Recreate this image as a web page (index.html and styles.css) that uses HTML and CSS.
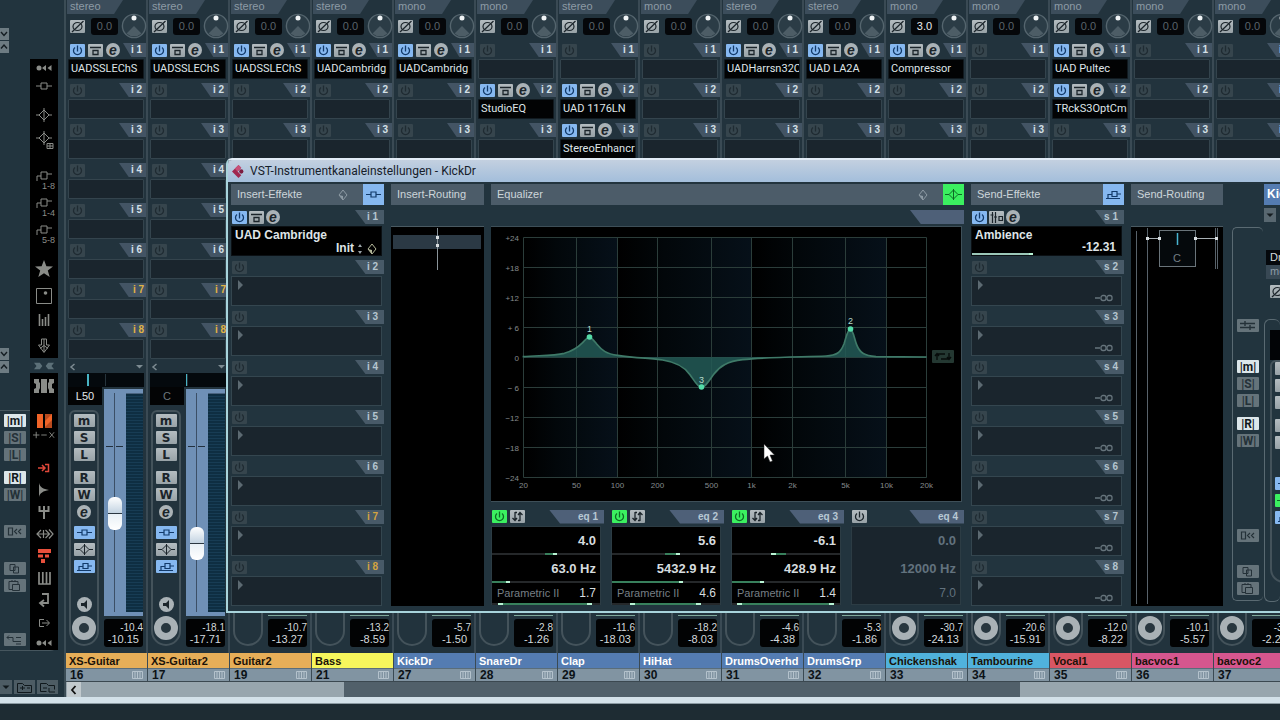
FILE: index.html
```html
<!DOCTYPE html>
<html lang="de">
<head>
<meta charset="utf-8">
<title>VST-Instrumentkanaleinstellungen - KickDr</title>
<link rel="stylesheet" href="styles.css">
</head>
<body>
<svg class="sprite" aria-hidden="true">
  <symbol id="power" viewBox="0 0 15 13"><path d="M5 3.5a4 4 0 1 0 5 0M7.5 1.5v6" fill="none" stroke="currentColor" stroke-width="1.3"/></symbol>
  <symbol id="bypass" viewBox="0 0 15 13"><path d="M2 3.5h11M5 6.500h5v4h-5z" fill="none" stroke="currentColor" stroke-width="1.3"/></symbol>
  <symbol id="prefader" viewBox="0 0 15 13"><path d="M3.500 1v11M6.500 1v11M1.500 4h3M5 6h3M10 5.500h3.500v4H10z" fill="none" stroke="currentColor" stroke-width="1.2"/></symbol>
  <symbol id="phase" viewBox="0 0 15 13"><ellipse cx="7.500" cy="6.500" rx="4.500" ry="4" fill="none" stroke="currentColor" stroke-width="1.2"/><path d="M2 12L13.500 1" stroke="currentColor" stroke-width="1.2"/></symbol>
  <symbol id="insert" viewBox="0 0 21 13"><path d="M3 6.500h5M8 4h5v5H8zM13 6.500h5" fill="none" stroke="currentColor" stroke-width="1.200"/></symbol>
  <symbol id="eq" viewBox="0 0 21 13"><path d="M2 6.500h4M15 6.500h4M10.500 2L15 6.500l-4.500 4.500L6 6.500zM10.500 1v11" fill="none" stroke="currentColor" stroke-width="1"/></symbol>
  <symbol id="send" viewBox="0 0 21 13"><path d="M3 10.500h14M5 10V6.500h4M9 3.500h5v5H9zM14 6h4" fill="none" stroke="currentColor" stroke-width="1.200"/></symbol>
  <symbol id="speaker" viewBox="0 0 15 15"><path d="M4 6h3l3-3v9L7 9H4z" fill="currentColor"/></symbol>
  <symbol id="diamond" viewBox="0 0 12 12"><path d="M6 1l4 5-4 5-4-5z" fill="none" stroke="currentColor" stroke-width="1"/><path d="M2 6l4 5V7z" fill="currentColor"/></symbol>
  <symbol id="swap" viewBox="0 0 15 13"><path d="M5 2v8M2.500 8L5 10.500 7 8M10 11V3M8 5l2-2.500L12.500 5M7 2.500H5M10 10.500H8" fill="none" stroke="currentColor" stroke-width="1.300"/></symbol>
  <symbol id="copy" viewBox="0 0 21 13"><path d="M6 2.500h5v6H6zM9.500 5h5v6h-5z" fill="none" stroke="currentColor"/></symbol>
  <symbol id="paste" viewBox="0 0 21 13"><path d="M5 2.500h9v3M5 2.500v8h3M8 1v2M11 1v2M8.500 5.500h7v6h-7z" fill="none" stroke="currentColor"/></symbol>
  <symbol id="reset" viewBox="0 0 21 13"><path d="M4.500 3h4v7h-4zM13 4l-2.500 2.500L13 9M17 4l-2.500 2.500L17 9" fill="none" stroke="currentColor" stroke-width="1.200"/></symbol>
  <symbol id="route" viewBox="0 0 21 13"><path d="M3 4.500h6M5 2.500L3 4.500l2 2M9 4.500v4h8M12 4.500h5M12 11h5" fill="none" stroke="currentColor"/></symbol>
  <symbol id="mixsel" viewBox="0 0 21 13"><path d="M3 4.500h15M3 8.500h15M8 2v5M13 6v5" fill="none" stroke="currentColor" stroke-width="1.400"/></symbol>
  <symbol id="eqswap" viewBox="0 0 22 13"><path d="M5 10V4h8M3 6l2-2.500L7 6M17 3v6H9M15 7l2 2.500L19 7" fill="none" stroke="currentColor" stroke-width="1.300"/></symbol>
  <symbol id="preset" viewBox="0 0 21 13"><path d="M3.500 2.500h5l2 2h7v7h-14zM6 7h5M8.500 5v4M13 7h3" fill="none" stroke="currentColor"/></symbol>
  <symbol id="preset-del" viewBox="0 0 21 13"><path d="M3.500 10.500v-8h6l2 2h6v4M6 7h4M3.500 10.500h6M12 7v4h6" fill="none" stroke="currentColor"/></symbol>
  <symbol id="down" viewBox="0 0 12 12"><path d="M2.500 4.500h7L6 8z" fill="currentColor"/></symbol>
  <symbol id="chev-d" viewBox="0 0 9 12"><path d="M1 4l3 3.500L7 4" fill="none" stroke="currentColor" stroke-width="1.400"/></symbol>
  <symbol id="chev-u" viewBox="0 0 9 12"><path d="M1 7.500L4 4l3 3.500" fill="none" stroke="currentColor" stroke-width="1.400"/></symbol>

  <symbol id="t-dots" viewBox="0 0 22 22"><circle cx="6" cy="11" r="2.500" fill="currentColor"/><path d="M13 8v6l-4-3zM18.500 8v6l-4-3z" fill="currentColor"/></symbol>
  <symbol id="t-insert" viewBox="0 0 22 22"><path d="M3 11h5M8 8h6v6H8zM14 11h5" fill="none" stroke="currentColor"/></symbol>
  <symbol id="t-eq" viewBox="0 0 22 22"><path d="M3 11h3M16 11h3M11 6l5 5-5 5-5-5zM11 4v14" fill="none" stroke="currentColor"/></symbol>
  <symbol id="t-eqg" viewBox="0 0 22 22"><path d="M3 9h3M16 9h3M11 4l5 5-5 5-5-5zM11 2v14M14 14.500h6v5h-6zM14 17h6M17 14v5" fill="none" stroke="currentColor"/></symbol>
  <symbol id="t-slot" viewBox="0 0 22 14"><path d="M4 13V8h4M8 4h6v7H8zM14 6h5" fill="none" stroke="currentColor"/></symbol>
  <symbol id="t-star" viewBox="0 0 22 22"><path d="M11 2l2.400 6.300 6.600.2-5.200 4.100 1.900 6.400-5.700-3.700L5.300 19l1.900-6.400L2 8.500l6.600-.2z" fill="currentColor"/></symbol>
  <symbol id="t-pan" viewBox="0 0 22 22"><path d="M3.500 3.500h15v15h-15z" fill="none" stroke="currentColor"/><circle cx="12.500" cy="8" r="1.800" fill="currentColor"/></symbol>
  <symbol id="t-meter" viewBox="0 0 22 22"><path d="M6.500 5v12M9.500 10v7M12.500 8v9M15.500 5v12" stroke="currentColor" stroke-width="1.600"/></symbol>
  <symbol id="t-arrow" viewBox="0 0 22 22"><path d="M8.500 4h5v6h3L11 17.500 5.500 10h3zM11 4v13M7 13.500l4-3 4 3" fill="none" stroke="currentColor"/></symbol>
  <symbol id="t-split" viewBox="0 0 24 12"><path d="M0 2h7l3 4-3 4H0l3-4zM24 2h-7l-3 4 3 4h7l-3-4z" fill="currentColor"/></symbol>
  <symbol id="t-cols" viewBox="0 0 22 22"><path d="M1 4h5v3l1 1v5l-1 2v3H1v-4l2-1V9L1 8zM8 4h6v14H8zM21 4h-5v3l-1 1v5l1 2v3h5v-4l-2-1V9l2-1z" fill="currentColor"/></symbol>
  <symbol id="t-orange" viewBox="0 0 22 22"><path d="M4 4h6v14H4z" fill="#f06428"/><path d="M12 4h7v14h-7z" fill="#b84a1e"/><path d="M19 4v6l-7 7V11z" fill="#f06428"/></symbol>
  <symbol id="t-pmx" viewBox="0 0 24 12"><path d="M0 6h7M3.500 2.500v7M9 6h6M18 3l5 6M23 3l-5 6" stroke="currentColor"/></symbol>
  <symbol id="t-in" viewBox="0 0 22 22"><path d="M5 11h7M9 8l3 3-3 3M12 7.500h3.500v7H12" fill="none" stroke="#e0483a" stroke-width="1.500"/></symbol>
  <symbol id="t-horn" viewBox="0 0 22 22"><path d="M6 4c1 4 4 6 10 7-6 1-9 3-10 7z" fill="currentColor"/></symbol>
  <symbol id="t-fork" viewBox="0 0 22 22"><path d="M6.500 5v5h9V5M11 5v13" fill="none" stroke="currentColor" stroke-width="2"/></symbol>
  <symbol id="t-lr" viewBox="0 0 22 22"><path d="M4 11h12M8 7l-4 4 4 4M10.500 7v8M12.500 7l4 4-4 4M16 6.500l4 4.500-4 4.500" fill="none" stroke="currentColor" stroke-width="1.200"/></symbol>
  <symbol id="t-bars" viewBox="0 0 22 22"><path d="M5 4h13v4H5zM5 9.500h5v3H5zM12 9.500h4v3h-4zM8 14h4v4H8z" fill="#e8503c"/></symbol>
  <symbol id="t-keys" viewBox="0 0 22 22"><path d="M6 5v12h11V5M9.800 5v12M13.500 5v12" fill="none" stroke="currentColor" stroke-width="1.700"/></symbol>
  <symbol id="t-ret" viewBox="0 0 22 22"><path d="M9 5h6v9H8M11 11l-4 3 4 3.500" fill="none" stroke="currentColor" stroke-width="1.800"/></symbol>
  <symbol id="t-out" viewBox="0 0 22 22"><path d="M11 7.500H6.500v7H11M9 11h7M13.500 8l3 3-3 3" fill="none" stroke="currentColor"/></symbol>
</svg>

<div class="desk">
  <main class="mixer">
    <aside class="rail" id="rail"></aside>
    <nav class="tools" id="tools" aria-label="Ansichten"></nav>
    <div class="console">
      <div class="channels" id="channels"></div>
      <div class="scroll">
        <button class="scroll-btn" aria-label="Nach links"><svg viewBox="0 0 14 14"><path d="M8.500 3L5 7l3.500 4" fill="none" stroke="#111" stroke-width="1.800"/></svg></button>
        <div class="scroll-thumb"></div>
      </div>
    </div>
  </main>
  <div class="edge"></div>

  <section class="win" aria-label="Kanaleinstellungen">
    <header class="win-title">
      <svg class="logo" viewBox="0 0 14 14"><path d="M7 0l3 3-4 4 4 4-3 3-7-7z" fill="#a02850"/><path d="M7 0l3 3-4 4-3-3z" fill="#c85078"/><circle cx="10" cy="7" r="2.300" fill="#7c1c40"/></svg>
      <h1>VST-Instrumentkanaleinstellungen - KickDr</h1>
    </header>
    <div class="win-body">
      <section class="col slots-col">
        <h2 class="cap">Insert-Effekte<svg class="cap-dia"><use href="#diamond"/></svg><button class="cap-btn blue" aria-label="Inserts"><svg class="w21"><use href="#insert"/></svg></button></h2>
        <div class="wslots" id="inserts"></div>
      </section>
      <section class="col route-col">
        <h2 class="cap">Insert-Routing</h2>
        <div class="route-view"><svg viewBox="0 0 92 379"><path d="M2 8h88v14H2z" fill="#2b3944"/><path d="M46.500 1v42" stroke="#8a949a"/><path d="M45 9h3v3h-3zM45 17h3v3h-3z" fill="#d8dde0"/></svg></div>
      </section>
      <section class="col eq-col">
        <h2 class="cap">Equalizer<svg class="cap-dia"><use href="#diamond"/></svg><button class="cap-btn green" aria-label="Equalizer"><svg class="w21"><use href="#eq"/></svg></button></h2>
        <div class="eq-tabrow"><span class="tab tab-wide"></span></div>
        <div class="graph" id="graph"></div>
        <div class="bands" id="bands"></div>
      </section>
      <section class="col slots-col">
        <h2 class="cap">Send-Effekte<button class="cap-btn blue" aria-label="Sends"><svg class="w21"><use href="#send"/></svg></button></h2>
        <div class="wslots" id="sends"></div>
      </section>
      <section class="col route-col">
        <h2 class="cap">Send-Routing</h2>
        <div class="route-view"><svg viewBox="0 0 92 379"><path d="M5.500 4v373M16.500 1v376M84.500 1v41M86.500 1v41" stroke="#58626a" fill="none"/><path d="M16 11.500h12M64 11.500h22" stroke="#a8b0b4"/><rect x="28.500" y="3.500" width="36" height="36" fill="#05090c" stroke="#6a747a"/><path d="M46.500 6v12" stroke="#48b4d0" stroke-width="1.500"/><path d="M15 10h3v3h-3zM27 10h3v3h-3zM63 10h3v3h-3zM84 10h3v3h-3z" fill="#d8dde0"/><text x="46" y="35" text-anchor="middle" class="pan-c">C</text></svg></div>
      </section>
      <aside class="side" id="side"></aside>
      <section class="strip">
        <h2 class="strip-name">KickDr</h2>
        <button class="mini-drop" aria-label="Menü"><svg class="i12"><use href="#down"/></svg></button>
        <div class="strip-out">Dr</div>
        <div class="strip-type">mono</div>
        <button class="btn gray strip-phase" aria-label="Phase"><svg class="w15"><use href="#phase"/></svg></button>
        <div class="strip-frame">
          <div class="strip-pan"></div>
          <div class="strip-inner" id="stripInner"></div>
        </div>
      </section>
    </div>
  </section>
  <svg class="cursor" viewBox="0 0 12 20"><path d="M1 1v15l3.500-3 2.500 6 2.500-1-2.500-6h4.500z" fill="#fff" stroke="#222" stroke-width=".5"/></svg>
</div>
<script src="app.js"></script>
</body>
</html>
```

FILE: styles.css
```css
* { box-sizing: border-box; }
body {
  margin: 0;
  background: #1e2c33;
  color: #c4d0d6;
  font-family: "Liberation Sans", Arial, sans-serif;
  font-size: 11px;
  line-height: 13px;
}
button { padding: 0; border: 0; margin: 0; font: inherit; color: inherit; display: block; }
h1, h2 { margin: 0; font-size: inherit; font-weight: normal; }
svg { display: block; }
.sprite { position: absolute; width: 0; height: 0; }
.w15 { width: 15px; height: 13px; }
.w21 { width: 21px; height: 13px; }
.i12 { width: 12px; height: 12px; }
.i22 { width: 22px; height: 22px; }

.desk { position: relative; overflow: hidden; }
.mixer { display: flex; background: #22343e; }
.edge { height: 7px; background: #d3e1e9; border-bottom: 1px solid #8b9aa2; }

/* shared buttons */
.btn { flex: none; width: 15px; height: 13px; border-radius: 1px; }
.blue { background: #86b8f0; color: #123a6a; }
.gray { background: linear-gradient(#b4bcc0, #98a2a7); color: #1b242a; }
.green { background: #3bf060; color: #0d6a24; }
.off { background: #36454d; color: #1f2b32; }
.round {
  flex: none;
  width: 14px; height: 14px; border-radius: 50%;
  background: #aab2b6; color: #1b242a;
  font: italic bold 14px/12px "Liberation Sans", Arial, sans-serif; text-align: center;
}

/* left rail */
.rail {
  width: 30px; display: grid; align-content: start;
  grid-template-rows: 28px 12px 1px 12px 295px 12px 1px 12px 37px 241px 29px 14px;
}
.nudge { width: 9px; height: 12px; background: #6d7b82; color: #141d22; }
.nudge svg { width: 9px; height: 12px; }
.rail-group {
  grid-row: 10; border: solid #46565e; border-width: 1px 0; border-radius: 0 8px 8px 0;
  padding: 3px 0 0 4px;
}
.rail-foot { grid-row: 12; display: flex; gap: 2px; }
.flagset { display: flex; flex-direction: column; gap: 4px; }
.flag {
  width: 22px; height: 13px; border-radius: 1px;
  background: #65737a; color: #243138;
  font: bold 12px/12px Roboto, "Liberation Sans", sans-serif; text-align: center;
}
.flag.on { background: #dce6ea; color: #10181c; }
.flag svg { width: 21px; height: 13px; }
.gap-6 { margin-top: 6px; }
.gap-20 { margin-top: 20px; }
.gap-38 { margin-top: 37px; }

/* tool columns */
.tools { width: 28px; padding-top: 59px; color: #8a8c88; }
.tools ul { list-style: none; margin: 0; padding: 0; background: #000; display: grid; justify-items: center; align-items: center; }
.tools .tools-a { grid-template-rows: 18px 18px 40px 10px 21px 26px 28px 26px 46px 8px 40px 12px; padding-bottom: 6px; }
.tools .tools-b { grid-template-rows: 26px 13px 18px 10px 17px repeat(7, 22px) 24px 15px; }
.tools .mid { height: 15px; display: flex; align-items: center; justify-content: center; }
.t-split { width: 24px; height: 10px; color: #5c7078; }
.slot-ico { width: 22px; font-size: 9px; line-height: 8px; text-align: right; }
.slot-ico svg { width: 22px; height: 14px; }
.preset-btn { flex: none; width: 21px; height: 14px; background: #4d5c64; color: #10181c; }
.preset-btn.narrow { width: 12px; }

/* console */
.console { flex: 1; min-width: 0; margin-left: 6px; border-left: 2px solid #3b4c55; }
.channels { display: flex; overflow: hidden; }
.ch { flex: none; width: 82px; background: #22333d; border-right: 2px solid #3a4a54; }
.ch-type {
  width: 56px; height: 14px; margin-left: 1px; padding-left: 3px;
  background: #3c4d5b; color: #8d9ba5;
  clip-path: polygon(0 0, 100% 0, 84% 100%, 0 100%);
}
.ch-in { height: 27px; display: flex; align-items: center; gap: 6px; padding: 0 0 3px 4px; }
.gain { flex: none; width: 27px; height: 17px; border-radius: 3px; background: #05070a; color: #5a646a; text-align: center; line-height: 17px; }
.gain.lit { color: #e8ecee; }
.knob { flex: none; width: 26px; height: 26px; margin-left: -3px; }
.slot { padding: 0 2px 2px; }
.slot-head { height: 18px; display: flex; align-items: center; gap: 3px; padding-left: 2px; }
.tab {
  width: 29px; height: 14px; margin-left: auto; padding-right: 5px;
  background: #44566a; color: #d4e0e8; font-weight: bold; font-size: 10px; text-align: right;
  clip-path: polygon(0 0, 100% 0, 100% 100%, 36% 100%);
}
.slot .tab { width: 27px; margin-right: -2px; padding-right: 4px; background: #435464; }
.slot .tab.hot { color: #e0b444; padding-right: 2px; }
.slot-box { height: 20px; border: 1px solid #34444d; background: #1a252d; border-radius: 1px; font-family: Roboto, "Liberation Sans", sans-serif; line-height: 18px; padding-left: 2px; white-space: nowrap; overflow: hidden; }
.slot-box.used { background: #020304; color: #dfe5e8; border-color: #111a20; }
.fold { height: 12px; display: flex; align-items: center; justify-content: space-between; padding: 0 3px; color: #7d8b92; }
.fold svg { width: 7px; height: 10px; }
.pan { height: 14px; margin: 0 2px; background: #04090d; }
.pan svg { width: 76px; height: 14px; }
.ch-main { height: 266px; display: flex; gap: 2px; padding-left: 2px; }
.ch-left { width: 34px; }
.pan-val { height: 18px; background: #030405; color: #6d777c; text-align: center; line-height: 19px; }
.pan-val.lit { color: #e4e8ea; }
.frame { width: 30px; margin: 5px 0 0 1px; padding: 2px 3px 4px; border: 2px solid #44535b; border-radius: 6px 6px 15px 15px; display: flex; flex-direction: column; gap: 4px; align-items: center; }
.key { width: 21px; height: 13px; border-radius: 1px; font: bold 12px/12px "DejaVu Sans", sans-serif; text-align: center; }
.frame .round { margin-bottom: 3px; }
.frame .spk { width: 15px; height: 15px; margin: 20px 0 0; }
.spk svg { width: 15px; height: 15px; }
.rec { flex: none; width: 24px; height: 24px; border-radius: 50%; border: 7px solid #a9b1b5; background: #28363e; }
.rec.none { border-color: transparent; background: none; }
.ch-right { width: 39px; padding-top: 2px; display: flex; flex-direction: column; gap: 3px; }
.fader-box { display: flex; height: 227px; background: #6f90b6; padding-top: 4px; }
.fader-box.dim { background: #22333d; border-bottom: 1px solid #7fa89c; }
.fader {
  appearance: none; -webkit-appearance: none; writing-mode: vertical-lr; direction: rtl;
  width: 22px; height: 219px; margin: 0;
  background:
    linear-gradient(#22303e, #22303e) 2px 53px / 7px 1px no-repeat,
    linear-gradient(#22303e, #22303e) 12px 53px / 7px 1px no-repeat,
    linear-gradient(#3b4f66, #3b4f66) 10px 0 / 1px 100% no-repeat;
}
.fader::-webkit-slider-thumb {
  -webkit-appearance: none; width: 14px; height: 33px; border: 0; border-radius: 6px;
  background: linear-gradient(#fff 0, #c4d4e2 48%, #2a3640 48%, #2a3640 52%, #e8f0f6 52%, #fff);
}
.meter { flex: 1; background: repeating-linear-gradient(#0e2e42 0 2px, #173c54 2px 3px); border-top: 1px solid #4a6480; margin-bottom: 4px; }
.levels { height: 28px; border-radius: 3px; background: #020304; color: #d3d9dc; text-align: right; font-size: 10px; line-height: 12px; padding: 3px 0 0; }
.levels .vol { display: block; font-size: 11px; line-height: 11px; padding-right: 4px; }
.ch-name { height: 15px; margin-right: -1px; padding-left: 3px; font-weight: bold; line-height: 16px; overflow: hidden; color: #1a1208; white-space: nowrap; }
.c-orange { background: #e6ae58; }
.c-yellow { background: #f6f65c; }
.c-blue { background: #547cb2; color: #fff; }
.c-cyan { background: #50b2dc; }
.c-red { background: #d85664; }
.c-pink { background: #d6568e; }
.ch-num { height: 13px; margin-right: -1px; padding: 0 4px; display: flex; justify-content: space-between; align-items: center; background: #8194a2; border-top: 1px solid #5a6d7a; color: #0c1216; font-weight: bold; font-size: 12px; }
.ch-num svg { width: 11px; height: 8px; }
.scroll { height: 16px; display: flex; background: #98a6ae; border-top: 1px solid #3b4850; }
.scroll-btn { width: 14px; background: #c2cace; margin-left: 1px; }
.scroll-btn svg { width: 14px; height: 14px; }
.scroll-thumb { flex: 1; margin: 0 260px 0 263px; background: #51606a; }

/* channel settings window */
.win { position: absolute; left: 226px; top: 158px; right: 0; border: solid #a8d4dc; border-width: 2px 0 2px 2px; border-top-color: #e2ecf6; border-radius: 6px 0 0 0; background: #22343e; overflow: hidden; }
.win-title { height: 22px; display: flex; align-items: center; gap: 5px; padding-left: 4px; background: linear-gradient(#c3d0e0, #a3bedb); color: #16202a; font: 12px/20px Roboto, "Open Sans", sans-serif; }
.logo { width: 13px; height: 13px; }
.win-body { height: 429px; display: flex; gap: 7px; padding: 2px 0 0 3px; }
.col { display: flex; flex-direction: column; }
.slots-col { flex: 0 0 153px; }
.route-col { flex: 0 0 93px; }
.route-col ~ .route-col { flex-basis: 92px; }
.eq-col { flex: 1; min-width: 0; }
.cap { height: 21px; margin-bottom: 3px; padding-left: 6px; display: flex; align-items: center; background: #4c5c69; color: #ccd5da; }
.cap-dia { width: 12px; height: 12px; margin: 0 14px 0 auto; color: #8d9ba5; }
.cap-btn { width: 21px; height: 21px; display: flex; align-items: center; }
.cap-btn:not(.cap-dia + .cap-btn) { margin-left: auto; }
.route-view { margin-top: 18px; height: 380px; background: #000; border-top: 1px solid #4a5a62; }
.route-view svg { width: 92px; height: 379px; }
.pan-c { fill: #747e84; font-size: 11px; }

.wslot { height: 50px; padding-bottom: 2px; }
.wslot .slot-head { gap: 2px; padding-left: 1px; }
.wslot .tab { background: #485a68; color: #b6c6d0; padding-right: 6px; }
.wslot .tab.hot { color: #d4a440; }
.wslot-box { height: 30px; width: 151px; border: 1px solid #34464f; background: #1a252d; padding: 3px; color: #76848a; display: flex; flex-direction: column; justify-content: space-between; }
.wslot-box.used { background: #000; color: #dfe4e7; font-weight: bold; font-size: 12px; padding: 2px 3px 0; border-color: #0b1014; }
.play { width: 6px; height: 10px; margin: 0 0 0 3px; color: #5c6a72; }
.inf { align-self: flex-end; margin-right: 4px; width: 19px; height: 8px; color: #66747c; }
.init { align-self: flex-end; display: flex; align-items: center; gap: 4px; }
.init svg { width: 12px; height: 12px; color: #b4b89a; }
.init .spin { width: 4px; height: 10px; color: #9aa4a8; }
.send-name { line-height: 12px; }
.sendval { align-self: flex-end; font-size: 12px; line-height: 12px; margin-right: 2px; }
.bar { height: 2px; background: #25282a; }
.fill { height: 2px; background: #38805c; border: solid #b8f4d4; border-width: 0 4px 0 0; }
.fill.both { border-width: 0 5px; }
.fill.left { border-width: 0 0 0 5px; }
.send-bar { background: none; margin: 0 -3px; }
.send-bar .fill { background: #9cc8b8; }

.eq-tabrow { height: 18px; display: flex; align-items: center; }
.eq-col .tab { background: #4e6078; color: #b8c8d4; }
.eq-col .tab-wide { width: 54px; clip-path: polygon(0 0, 100% 0, 100% 100%, 20% 100%); }
.graph { height: 276px; margin-right: 2px; background: #000; border: 1px solid #3e4f58; border-width: 1px 1px 1px 0; }
.graph svg { width: 100%; height: 273px; }
.axis { fill: #858b8e; font-size: 8px; }
.mark { fill: #b8dccc; font-size: 9px; }
.bands { display: grid; grid-template-columns: repeat(4, 1fr); gap: 7px; margin-top: 5px; }
.band-head { height: 19px; display: flex; align-items: center; gap: 3px; padding-left: 1px; }
.band-head .tab { width: 55px; padding-right: 6px; clip-path: polygon(0 0, 100% 0, 100% 100%, 20% 100%); }
.band-box { height: 79px; margin-right: 3px; background: #000; border: 1px solid #2c3c44; color: #d6dcdf; }
.band-box .big { height: 26px; padding-right: 4px; text-align: right; font-size: 13px; line-height: 28px; font-weight: bold; }
.band-box .row { height: 20px; padding: 0 4px 0 5px; display: flex; justify-content: space-between; line-height: 21px; }
.row .mode { color: #777f84; }
.row .q { font-size: 12px; }
.band-box.idle { background: #1a252d; color: #62727e; }
.idle .bar { background: none; }

.side { flex: 0 0 31px; margin: 43px 0 10px 2px; border: 1px solid #5a6a72; border-radius: 5px; border-right: 0; padding: 91px 0 0 4px; }
.side .flagset .first { margin-bottom: 24px; }
.side .flagset .reset { margin-top: 78px; }
.side .flagset .copy { margin-top: 19px; }
.strip { flex: 0 0 16px; margin-left: -6px; overflow: hidden; }
.strip-name { height: 21px; background: #547cb2; color: #fff; font-weight: bold; font-size: 12px; line-height: 21px; padding-left: 3px; }
.mini-drop { width: 12px; height: 14px; margin-top: 3px; background: #586770; color: #141c20; }
.strip-out { height: 15px; margin: 28px 0 0 2px; background: #05080c; color: #d4dadd; line-height: 15px; padding-left: 4px; }
.strip-type { height: 14px; margin-left: 2px; background: #384854; color: #8d9ba5; padding-left: 4px; }
.strip-phase { margin: 6px 0 0 6px; }
.strip-frame { margin-top: 21px; height: 283px; border: 1px solid #5a6a72; border-right: 0; border-radius: 6px; padding: 10px 0 0 5px; }
.strip-pan { height: 30px; background: #020406; }
.strip-inner { height: 223px; width: 30px; border: 2px solid #44535b; border-radius: 6px 0 0 14px; padding: 0 0 0 3px; display: flex; flex-direction: column; gap: 4px; }
.strip-inner .gap-big { margin-top: 24px; }

.cursor { position: absolute; left: 763px; top: 443px; width: 12px; height: 20px; }
```

FILE: app.js
```js
const ico = (name, cls) => `<svg class="${cls}"><use href="#${name}"/></svg>`;
const el = id => document.getElementById(id);

const flag = (label, cls = '') => `<button class="flag ${cls}">${label}</button>`;

/* left rail */
const nudge = (name, row) => `<button class="nudge" style="grid-row:${row}" aria-label="Schritt"><svg><use href="#${name}"/></svg></button>`;
el('rail').innerHTML =
  nudge('chev-d', 2) + nudge('chev-u', 4) + nudge('chev-d', 6) + nudge('chev-u', 8) +
  `<div class="rail-group"><div class="flagset">
    ${flag('|m|', 'on')}${flag('|S|')}${flag('|L|')}
    ${flag('|R|', 'on gap-6')}${flag('|W|')}
    ${flag(ico('reset', ''), 'gap-20')}${flag(ico('copy', ''), 'gap-20')}${flag(ico('paste', ''))}
    ${flag(ico('route', ''), 'gap-38')}
  </div></div>
  <div class="rail-foot">
    <button class="preset-btn narrow" aria-label="Menü">${ico('down', 'i12')}</button>
    <button class="preset-btn" aria-label="Preset speichern">${ico('preset', 'w21')}</button>
    <button class="preset-btn" aria-label="Preset entfernen">${ico('preset-del', 'w21')}</button>
  </div>`;

/* tool columns */
const li = h => `<li>${h}</li>`;
const t = n => li(ico('t-' + n, 'i22'));
const slotIco = r => li(`<div class="slot-ico">${ico('t-slot', '')}${r}</div>`);
el('tools').innerHTML =
  `<ul class="tools-a">${t('dots')}${t('insert')}${t('eq')}${t('eqg')}${li('')}${slotIco('1-8')}${slotIco('1-4')}${slotIco('5-8')}${t('star')}${t('pan')}${t('meter')}${t('arrow')}</ul>
   <div class="mid">${ico('t-split', 't-split')}</div>
   <ul class="tools-b">${t('cols')}${li('')}${t('orange')}${t('pmx')}${li('')}${t('in')}${t('horn')}${t('fork')}${t('lr')}${t('bars')}${t('keys')}${t('ret')}${t('out')}${t('dots')}</ul>`;

/* mixer channels */
const channels = [
  ['stereo', '0.0', { 1: 'UADSSLEChS' }, 'XS-Guitar', 16, 'orange', '-10.4', '-10.15', true],
  ['stereo', '0.0', { 1: 'UADSSLEChS' }, 'XS-Guitar2', 17, 'orange', '-18.1', '-17.71', true],
  ['stereo', '0.0', { 1: 'UADSSLEChS' }, 'Guitar2', 19, 'orange', '-10.7', '-13.27', false],
  ['stereo', '0.0', { 1: 'UADCambridg' }, 'Bass', 21, 'yellow', '-13.2', '-8.59', false],
  ['mono', '0.0', { 1: 'UADCambridg' }, 'KickDr', 27, 'blue', '-5.7', '-1.50', false],
  ['mono', '0.0', { 2: 'StudioEQ' }, 'SnareDr', 28, 'blue', '-2.8', '-1.26', false],
  ['stereo', '0.0', { 2: 'UAD 1176LN', 3: 'StereoEnhancr' }, 'Clap', 29, 'blue', '-11.6', '-18.03', false],
  ['mono', '0.0', {}, 'HiHat', 30, 'blue', '-18.2', '-8.03', false],
  ['stereo', '0.0', { 1: 'UADHarrsn32C' }, 'DrumsOverhd', 31, 'blue', '-4.6', '-4.38', false],
  ['stereo', '0.0', { 1: 'UAD LA2A' }, 'DrumsGrp', 32, 'blue', '-5.3', '-1.86', false],
  ['mono', '3.0', { 1: 'Compressor' }, 'Chickenshak', 33, 'cyan', '-30.7', '-24.13', true],
  ['mono', '0.0', {}, 'Tambourine', 34, 'cyan', '-20.6', '-15.91', true],
  ['mono', '0.0', { 1: 'UAD Pultec', 2: 'TRckS3OptCm' }, 'Vocal1', 35, 'red', '-12.0', '-8.22', true],
  ['mono', '0.0', {}, 'bacvoc1', 36, 'pink', '-10.1', '-5.57', true],
  ['mono', '0.0', {}, 'bacvoc2', 37, 'pink', '-3.5', '-2.29', true]
];

const knob = `<svg class="knob" viewBox="0 0 28 28"><circle cx="14" cy="14" r="12.500" fill="#2b3c46" stroke="#55656e" stroke-width="1.5"/><path d="M14 14l8 8a12 12 0 0 1-16 0z" fill="#4d5d66"/><circle cx="14" cy="5.500" r="2.700" fill="#f0f4f6"/></svg>`;

const power = on => `<button class="btn ${on}" aria-label="Ein/Aus">${ico('power', 'w15')}</button>`;
const edit = '<button class="round">e</button>';

function slot(n, name, labelled) {
  const hot = n > 6 ? ' hot' : '';
  const head = name
    ? power('blue') + `<button class="btn gray" aria-label="Bypass">${ico('bypass', 'w15')}</button>` + edit
    : power('off');
  return `<div class="slot"><div class="slot-head">${head}<span class="tab${hot}">${labelled ? 'i ' + n : ''}</span></div>
    <div class="slot-box${name ? ' used' : ''}">${name || ''}</div></div>`;
}

const keys = k => k.map(([label, cls]) => `<button class="key ${cls}">${label}</button>`).join('');

function channel(c, i) {
  const [type, gain, inserts, name, num, color, peak, vol, rec] = c;
  const left = i === 0;
  const open = i < 2;
  let slots = '';
  for (let n = 1; n < 9; n++) slots += slot(n, inserts[n], open || n < 4);
  const letters = open ? ['m', 'S', 'L', 'R', 'W'] : ['', '', '', '', ''];
  return `<article class="ch">
    <div class="ch-type">${type}</div>
    <div class="ch-in"><button class="btn gray" aria-label="Phase">${ico('phase', 'w15')}</button><span class="gain${gain !== '0.0' ? ' lit' : ''}">${gain}</span>${knob}</div>
    ${slots}
    <div class="fold"><svg viewBox="0 0 7 10"><path d="M5.500 2L2 5l3.500 3" fill="none" stroke="currentColor" stroke-width="1.500"/></svg><svg viewBox="0 0 7 10"><path d="M0 3h7L3.500 6.500z" fill="currentColor"/></svg></div>
    <div class="pan"><svg viewBox="0 0 76 14"><path d="M${left ? 20 : 37} 1v12" stroke="#48b4c4" stroke-width="2"/><path d="M37.500 1v12" stroke="#26343c"/></svg></div>
    <div class="ch-main">
      <div class="ch-left">
        <div class="pan-val${left ? ' lit' : ''}">${left ? 'L50' : open ? 'C' : ''}</div>
        <div class="frame">
          ${keys(letters.map((l, k) => [l, k === 3 ? 'gray gap-6' : 'gray']))}
          <button class="round">${open ? 'e' : ''}</button>
          ${keys([[ico('insert', 'w21'), 'blue'], [ico('eq', 'w21'), 'gray'], [ico('send', 'w21'), 'blue']])}
          <button class="round spk" aria-label="Monitor"><svg><use href="#speaker"/></svg></button>
          <button class="rec${rec ? '' : ' none'}" aria-label="Aufnahme"></button>
        </div>
      </div>
      <div class="ch-right">
        <div class="fader-box${open ? '' : ' dim'}"><input class="fader" type="range" min="0" max="100" value="${left ? 44 : 28}" aria-label="Pegel ${name}"><div class="meter"></div></div>
        <div class="levels">${peak}<span class="vol">${vol}</span></div>
      </div>
    </div>
    <div class="ch-name c-${color}">${name}</div>
    <div class="ch-num">${num}<svg viewBox="0 0 11 8"><path d="M.5.500h10v7H.5zM3 1v6M5.500 1v6M8 1v6" fill="none" stroke="#b4c2cc"/></svg></div>
  </article>`;
}
el('channels').innerHTML = channels.map(channel).join('');

/* window slots */
const play = '<svg class="play" viewBox="0 0 6 10"><path d="M0 0l5 5-5 5z" fill="currentColor"/></svg>';
const inf = '<svg class="inf" viewBox="0 0 19 8"><path d="M0 4h5" stroke="currentColor" stroke-width="1.500"/><rect x="6" y="1.500" width="5" height="5" rx="2" fill="none" stroke="currentColor" stroke-width="1.300"/><rect x="12" y="1.500" width="5" height="5" rx="2" fill="none" stroke="currentColor" stroke-width="1.300"/></svg>';

function wslot(kind, n) {
  const first = n === 1;
  const second = kind === 'i' ? 'bypass' : 'prefader';
  const head = first
    ? power('blue') + `<button class="btn gray" aria-label="Modus">${ico(second, 'w15')}</button>` + edit
    : power('off');
  let body = play + (kind === 's' ? inf : '');
  if (first && kind === 'i') body = `<span>UAD Cambridge</span><span class="init">Init<svg class="spin" viewBox="0 0 4 10"><path d="M0 3l2-3 2 3zM0 7h4l-2 3z" fill="currentColor"/></svg>${ico('diamond', '')}</span>`;
  if (first && kind === 's') body = `<span class="send-name">Ambience</span><span class="sendval">-12.31</span><div class="bar send-bar"><div class="fill" style="width:41%"></div></div>`;
  const hot = kind === 'i' && n > 6 ? ' hot' : '';
  return `<div class="wslot"><div class="slot-head">${head}<span class="tab${hot}">${kind} ${n}</span></div><div class="wslot-box${first ? ' used' : ''}">${body}</div></div>`;
}
const eight = [1, 2, 3, 4, 5, 6, 7, 8];
el('inserts').innerHTML = eight.map(n => wslot('i', n)).join('');
el('sends').innerHTML = eight.map(n => wslot('s', n)).join('');

/* equalizer graph */
const xs = [[32.5, '20'], [85.5, '50'], [126.5, '100'], [166.5, '200'], [220.5, '500'], [260.5, '1k'], [301.5, '2k'], [354.5, '5k'], [395.5, '10k'], [435.5, '20k']];
const ys = ['+24', '+18', '+12', '+ 6', '0', '− 6', '−12', '−18', '−24'];
const grid = xs.map(([x]) => `M${x} 10.500V250.500`).join('') + ys.map((_, i) => `M32.500 ${10.5 + 30 * i}H435.500`).join('');
const labels = xs.map(([x, l]) => `<text class="axis" text-anchor="middle" x="${x}" y="261">${l}</text>`).join('') +
  ys.map((l, i) => `<text class="axis" text-anchor="end" x="28" y="${14 + 30 * i}">${l}</text>`).join('');
const curve = 'M110 530C160 526 200 528 235 520C265 512 278 500 290 488C300 476 304 472 310 472C317 472 322 480 332 492C347 510 360 522 395 526C450 534 500 535 530 540C570 546 595 560 612 584C626 604 636 622 646 622C658 622 668 604 684 582C702 558 725 544 770 539C840 531 950 531 1020 528C1052 526 1064 518 1074 492C1081 470 1085 448 1093 448C1101 448 1104 472 1112 494C1122 520 1136 527 1170 530L1322 531';
el('graph').innerHTML = `<svg viewBox="0 0 470 273">
  <defs><linearGradient id="oct"><stop offset="0" stop-color="#000"/><stop offset=".35" stop-color="#02070a"/><stop offset="1" stop-color="#061019"/></linearGradient></defs>
  <path d="M33 10h93v240H33z" fill="url(#oct)"/><path d="M127 10h133v240H127z" fill="url(#oct)"/><path d="M261 10h134v240H261z" fill="url(#oct)"/>
  <path d="${grid}" stroke="#2b3d3a" fill="none"/>
  ${labels}
  <g transform="translate(-5 -47) scale(.3333)"><path d="${curve}L1322 532H110z" fill="#235a56" opacity=".85"/><path d="${curve}" fill="none" stroke="#3f7a68" stroke-width="5"/></g>
  <g fill="#54dca8"><circle cx="98.500" cy="110" r="2.800"/><circle cx="210.500" cy="160" r="2.800"/><circle cx="359.500" cy="102" r="2.800"/></g>
  <g class="mark" text-anchor="middle"><text x="98.500" y="105">1</text><text x="210.500" y="156">3</text><text x="359.500" y="97">2</text></g>
  <rect x="441" y="123" width="22" height="13" rx="1" fill="#243832"/><use href="#eqswap" x="441" y="123" width="22" height="13" color="#060b0a"/>
</svg>`;

/* equalizer bands */
const bands = [
  ['4.0', '63.0 Hz', '1.7', [49, 11, ''], [0, 17, ''], [6, 87, 'both']],
  ['5.6', '5432.9 Hz', '4.6', [49, 14, ''], [0, 66, ''], [17, 65, 'both']],
  ['-6.1', '428.9 Hz', '1.4', [36, 14, 'left'], [0, 30, ''], [5, 89, 'both']],
  ['0.0', '12000 Hz', '7.0']
];
const bar = b => `<div class="bar">${b ? `<div class="fill ${b[2]}" style="margin-left:${b[0]}%;width:${b[1]}%"></div>` : ''}</div>`;
el('bands').innerHTML = bands.map((b, i) => {
  const on = i < 3;
  const head = on ? power('green') + `<button class="btn gray" aria-label="Invertieren">${ico('swap', 'w15')}</button>` : power('gray');
  return `<div><div class="band-head">${head}<span class="tab">eq ${i + 1}</span></div>
    <div class="band-box${on ? '' : ' idle'}"><div class="big">${b[0]}</div>${bar(b[3])}<div class="big">${b[1]}</div>${bar(b[4])}
    <div class="row"><span class="mode">${on ? 'Parametric II' : ''}</span><span class="q">${b[2]}</span></div>${bar(b[5])}</div></div>`;
}).join('');

/* right side of the window */
el('side').innerHTML = `<div class="flagset">
  ${flag(ico('mixsel', ''), 'first')}
  ${flag('|m|', 'on')}${flag('|S|')}${flag('|L|')}${flag('|R|', 'on gap-6')}${flag('|W|')}
  ${flag(ico('reset', ''), 'reset')}${flag(ico('copy', ''), 'copy')}${flag(ico('paste', ''))}
</div>`;
el('stripInner').innerHTML = keys([['', 'gray'], ['', 'gray'], ['', 'gray'], ['', 'gray gap-6'], ['', 'gray'],
  [ico('insert', 'w21'), 'blue gap-big'], [ico('eq', 'w21'), 'green'], [ico('send', 'w21'), 'blue']]);
```
